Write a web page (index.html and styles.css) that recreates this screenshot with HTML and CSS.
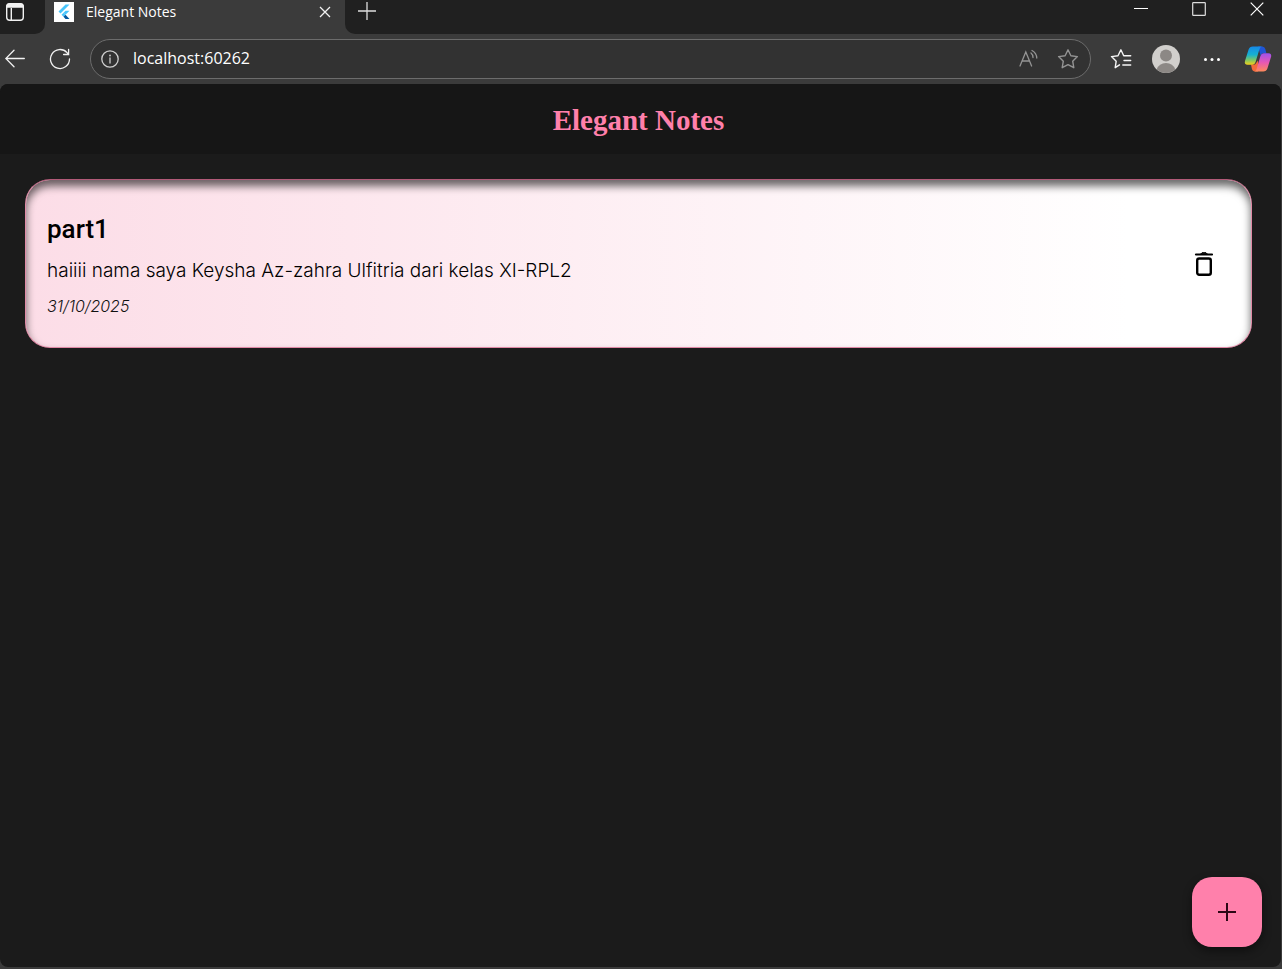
FILE: index.html
```html
<!DOCTYPE html>
<html lang="id">
<head>
<meta charset="utf-8">
<meta name="viewport" content="width=device-width, initial-scale=1">
<title>Elegant Notes</title>
<link rel="stylesheet" href="styles.css">
</head>
<body>
<div class="browser">
  <div class="tabstrip">
    <div class="strip-start">
      <button class="icon-button" aria-label="Tab actions">
        <svg width="20" height="20" viewBox="0 0 20 20" fill="none" stroke="#f2f2f2" stroke-width="1.4"><rect x="1.7" y="1.7" width="16.6" height="16.6" rx="3"/><path d="M2 3.8Q2.500 2 4.500 2h11q2 0 2.500 1.800V5H2z" fill="#f2f2f2"/><path d="M6.300 6v12"/></svg>
      </button>
    </div>
    <div class="tab">
      <svg class="favicon" width="20" height="20" viewBox="0 0 20 20"><path fill="#fff" d="M0 0h20v20H0z"/><path fill="#47c5fb" d="M11.500 2.500h4L6.500 11.500l-2-2zM11.500 8.700h4l-4 4-2-2z"/><path fill="#47c5fb" d="M7.500 12.700l2-2 2 2-2 2z"/><path fill="#00569e" d="M9.500 14.700l2-2 4 4.200h-4z"/></svg>
      <span class="tab-title">Elegant Notes</span>
      <button class="icon-button" aria-label="Close tab">
        <svg width="12" height="12" viewBox="0 0 12 12" stroke="#f2f2f2" stroke-width="1.3"><path d="M1 1l10 10M11 1L1 11"/></svg>
      </button>
    </div>
    <div class="strip-end">
      <button class="icon-button" aria-label="New tab">
        <svg width="18" height="18" viewBox="0 0 18 18" stroke="#dedede" stroke-width="1.3"><path d="M9 0v18M0 9h18"/></svg>
      </button>
      <div class="window-controls">
        <button class="icon-button" aria-label="Minimize"><svg width="14" height="14" viewBox="0 0 14 14" stroke="#fff"><path d="M0 6.500h14"/></svg></button>
        <button class="icon-button" aria-label="Maximize"><svg width="14" height="14" viewBox="0 0 14 14" fill="none" stroke="#ddd" stroke-width="1.2"><rect x=".7" y=".7" width="12.600" height="12.600" rx=".6"/></svg></button>
        <button class="icon-button" aria-label="Close window"><svg width="14" height="14" viewBox="0 0 14 14" stroke="#fff" stroke-width="1.200"><path d="M.7.7l12.600 12.600M13.300.7L.7 13.300"/></svg></button>
      </div>
    </div>
  </div>

  <div class="toolbar">
    <button class="icon-button" aria-label="Back">
      <svg width="20" height="20" viewBox="0 0 20 20" fill="none" stroke="#f2f2f2" stroke-width="1.300" stroke-linecap="round"><path d="M19.300 9.500H.8M9 1.300L.8 9.500 9 17.700"/></svg>
    </button>
    <button class="icon-button" aria-label="Refresh">
      <svg width="22" height="22" viewBox="0 0 22 22" fill="none" stroke="#f2f2f2" stroke-width="1.300" stroke-linecap="round"><path d="M20.500 11A9.500 9.500 0 1 1 18 4.600l1.400 1.600M19.600 1.500v5h-5"/></svg>
    </button>
    <div class="address">
      <svg width="18" height="18" viewBox="0 0 18 18" fill="none" stroke="#cfcfcf" stroke-width="1.300"><circle cx="9" cy="9" r="8.200"/><path d="M9 8v5" stroke-linecap="round"/><circle cx="9" cy="5.500" r=".9" fill="#cfcfcf" stroke="none"/></svg>
      <input class="url" type="text" aria-label="Address" value="localhost:60262">
      <button class="icon-button" aria-label="Read aloud">
        <svg width="20" height="20" viewBox="0 0 20 20" fill="none" stroke="#949494" stroke-width="1.300" stroke-linecap="round"><path d="M1 17L6.800 3l5.800 14M3 12h7.600M12 4q2 1.500 2 4.500M13 1.500q4.500 2.500 4.800 7.500"/></svg>
      </button>
      <button class="icon-button" aria-label="Add to favorites">
        <svg width="22" height="22" viewBox="0 0 22 22" fill="none" stroke="#949494" stroke-width="1.400" stroke-linejoin="round"><path d="M11 1.800l2.900 5.900 6.500.9-4.700 4.600 1.100 6.500L11 16.600l-5.800 3.100 1.100-6.500L1.600 8.600l6.500-.9z"/></svg>
      </button>
    </div>
    <div class="actions">
      <button class="icon-button" aria-label="Favorites">
        <svg width="22" height="22" viewBox="0 0 22 22" fill="none" stroke="#f5f5f5" stroke-width="1.400" stroke-linejoin="round" stroke-linecap="round"><path d="M9.500 16.800l-4.300 2.900 1-6.500L1.500 8.600 8 7.700l2.900-5.900 2.800 5.900h7M14 12.500h6.700M12.800 17h7.900"/></svg>
      </button>
      <button class="icon-button" aria-label="Profile">
        <svg width="28" height="28" viewBox="0 0 28 28"><circle cx="14" cy="14" r="14" fill="#d1cfcc"/><circle cx="14" cy="10.500" r="6" fill="#8c8885"/><path d="M4.700 24.500Q7 18 14 18t9.300 6.500Q19 28 14 28t-9.300-3.500z" fill="#8c8885"/></svg>
      </button>
      <button class="icon-button" aria-label="Settings and more">
        <svg width="24" height="18" viewBox="0 0 24 18" fill="#fff"><circle cx="5.500" cy="9.500" r="1.500"/><circle cx="12" cy="9.500" r="1.500"/><circle cx="18.500" cy="9.500" r="1.500"/></svg>
      </button>
      <button class="icon-button" aria-label="Copilot">
        <svg width="28" height="28" viewBox="0 0 28 28">
          <defs>
            <linearGradient id="cool" x1="0" y1="0" x2="0" y2="1"><stop offset="0" stop-color="#1689e8"/><stop offset=".45" stop-color="#16b1d1"/><stop offset=".75" stop-color="#82c760"/><stop offset="1" stop-color="#f5cf18"/></linearGradient>
            <linearGradient id="warm" x1="0" y1="0" x2="0" y2="1"><stop offset="0" stop-color="#9d52ed"/><stop offset=".5" stop-color="#e757b4"/><stop offset="1" stop-color="#ff8a58"/></linearGradient>
          </defs>
          <path fill="#2055d6" d="M14 1.500h4.500q2 0 2.800 2.600l1.100 4.200h-3q-2 0-2.700 2.400z"/>
          <path fill="#f26a3c" d="M7 19.500h4l3-4v11h-3q-2.500 0-3.200-3z"/>
          <path fill="url(#cool)" d="M8.800 1.500h9q-1.800.6-2.400 2.700L11.600 17q-.8 2.800-3.300 2.800H3.600Q0 19.800 1 16L4.600 4.500q1-3 4.200-3z"/>
          <path fill="url(#warm)" d="M19.700 8.300h4.700q3.600 0 2.600 3.800l-3.600 11.500q-1 3-4.200 3h-9q1.800-.6 2.400-2.700l3.800-12.800q.8-2.800 3.300-2.800z"/>
        </svg>
      </button>
    </div>
  </div>

  <div class="page">
    <header class="app-bar"><h1 class="app-title">Elegant Notes</h1></header>
    <main class="notes">
      <article class="note">
        <div class="note-text">
          <h2 class="note-title">part1</h2>
          <p class="note-body">haiiii nama saya Keysha Az-zahra Ulfitria dari kelas XI-RPL2</p>
          <time class="note-date" datetime="2025-10-31">31/10/2025</time>
        </div>
        <button class="icon-button" aria-label="Delete note">
          <svg width="20" height="26" viewBox="0 0 20 26" fill="none" stroke="#000" stroke-width="2.400" stroke-linejoin="round" stroke-linecap="round"><rect x="3.200" y="7.500" width="13.600" height="16.300" rx="2"/><path d="M2 3.500h16" stroke-width="2.200"/><path d="M7 2.700l1-1h4l1 1z" stroke-width="1" fill="#000"/></svg>
        </button>
      </article>
    </main>
    <button class="add" aria-label="Add note">
      <svg width="18" height="18" viewBox="0 0 18 18" stroke="#2c0715" stroke-width="2"><path d="M9 0v18M0 9h18"/></svg>
    </button>
  </div>
</div>
</body>
</html>
```
FILE: styles.css
```css
* { box-sizing: border-box; }
body { margin: 0; background: #3b3b3b; font-family: "Open Sans", sans-serif; }
h1, h2, p { margin: 0; }
svg { display: block; }

.browser { display: flex; flex-direction: column; min-height: 100vh; }

.icon-button {
  flex: none;
  padding: 0;
  border: 0;
  background: none;
  cursor: pointer;
}

.tabstrip { display: flex; height: 34px; }
.strip-start {
  width: 45px;
  padding: 2px 0 0 5px;
  background: #202020;
  border-bottom-right-radius: 10px;
}
.tab {
  display: flex;
  align-items: center;
  width: 300px;
  height: 24px;
  padding: 0 14px 0 9px;
}
.tab-title {
  flex: 1;
  padding: 0 0 2px 12px;
  color: #fff;
  font-size: 14px;
}
.strip-end {
  display: flex;
  flex: 1;
  align-items: flex-start;
  justify-content: space-between;
  padding: 2px 18px 0 13px;
  background: #202020;
  border-bottom-left-radius: 10px;
}
.window-controls { display: flex; gap: 44px; }

.toolbar {
  display: flex;
  align-items: center;
  gap: 19px;
  height: 50px;
  padding: 0 10px 0 5px;
}
.toolbar > .icon-button:first-child { margin-right: 5px; }
.address {
  display: flex;
  flex: 1;
  align-items: center;
  gap: 18px;
  height: 40px;
  padding: 0 11px 0 10px;
  background: #323232;
  border: 1px solid #6c6c6c;
  border-radius: 20px;
}
.url {
  flex: 1;
  min-width: 0;
  margin-left: -4px;
  padding: 0 0 2px;
  border: 0;
  outline: 0;
  background: none;
  color: #fff;
  font: 16px "Open Sans", sans-serif;
}
.actions {
  display: flex;
  align-items: center;
  gap: 20px;
}

.page {
  display: flex;
  flex: 1;
  flex-direction: column;
  margin: 0 1px 2px 0;
  overflow: hidden;
  background: #1b1b1b;
  border-radius: 8px;
}
.app-bar {
  display: flex;
  align-items: center;
  justify-content: center;
  height: 70px;
  padding: 2px 4px 0 0;
  background: #161616;
}
.app-title {
  color: #ff80ab;
  font: bold 29px "Liberation Serif", serif;
}
.notes { flex: 1; padding: 25px 29px 25px 25px; }
.note {
  display: flex;
  align-items: center;
  justify-content: space-between;
  padding: 29px 37px 29px 21px;
  background: linear-gradient(90deg, #fcdde7, #ffffff 90%);
  border: 1px solid #e088a5;
  border-top-color: #b25a78;
  border-radius: 25px;
  box-shadow: inset 0 6px 8px rgba(0, 0, 0, 0.6);
}
.note-title { font: 500 26px/40px Roboto, sans-serif; color: #000; }
.note-body {
  margin-top: 5px;
  color: #000;
  font: 300 19px/34px Inter, sans-serif;
}
.note-date {
  display: block;
  margin-top: 7px;
  color: #111;
  font: italic 300 16px/23px Inter, sans-serif;
}

.add {
  display: flex;
  align-items: center;
  align-self: flex-end;
  justify-content: center;
  width: 70px;
  height: 70px;
  margin: 0 19px 20px 0;
  border: 0;
  border-radius: 20px;
  background: #ff80ab;
  box-shadow: 0 4px 10px rgba(0, 0, 0, 0.45);
  cursor: pointer;
}
```
